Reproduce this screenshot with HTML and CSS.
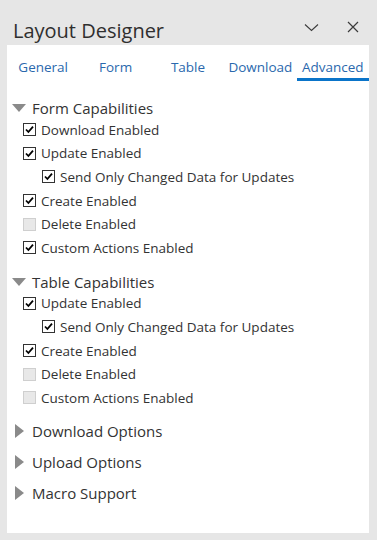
FILE: index.html
```html
<!DOCTYPE html>
<html lang="en">

<head>
    <meta charset="UTF-8">
    <meta name="viewport" content="width=device-width, initial-scale=1.0">
    <title>Layout Designer</title>
    <link rel="stylesheet" href="styles.css">
</head>

<body>
    <div class="header">
        <h1 class="title">Layout Designer</h1>
        <div class="header-buttons">
            <span class="icon-btn">
                <svg width="15" height="9" viewBox="0 0 15 9"><polyline points="1,1.5 7.5,7.5 14,1.5" fill="none" stroke="#3b3b3b" stroke-width="1.1"/></svg>
            </span>
            <span class="icon-btn">
                <svg width="12" height="12" viewBox="0 0 12 12"><path d="M1 1 L11 11 M11 1 L1 11" stroke="#3b3b3b" stroke-width="1.2"/></svg>
            </span>
        </div>
    </div>

    <div class="panel">
        <div class="tabs">
            <div class="tab">General</div>
            <div class="tab">Form</div>
            <div class="tab">Table</div>
            <div class="tab">Download</div>
            <div class="tab active">Advanced</div>
        </div>

        <div class="section">
            <div class="section-head"><span class="tri-down"></span>Form Capabilities</div>
            <div class="row"><span class="box checked"></span>Download Enabled</div>
            <div class="row"><span class="box checked"></span>Update Enabled</div>
            <div class="row sub"><span class="box checked"></span>Send Only Changed Data for Updates</div>
            <div class="row"><span class="box checked"></span>Create Enabled</div>
            <div class="row"><span class="box off"></span>Delete Enabled</div>
            <div class="row"><span class="box checked"></span>Custom Actions Enabled</div>
        </div>

        <div class="section">
            <div class="section-head"><span class="tri-down"></span>Table Capabilities</div>
            <div class="row"><span class="box checked"></span>Update Enabled</div>
            <div class="row sub"><span class="box checked"></span>Send Only Changed Data for Updates</div>
            <div class="row"><span class="box checked"></span>Create Enabled</div>
            <div class="row"><span class="box off"></span>Delete Enabled</div>
            <div class="row"><span class="box off"></span>Custom Actions Enabled</div>
        </div>

        <div class="collapsed">
            <div class="collapsed-head"><span class="tri-right"></span>Download Options</div>
            <div class="collapsed-head"><span class="tri-right"></span>Upload Options</div>
            <div class="collapsed-head"><span class="tri-right"></span>Macro Support</div>
        </div>
    </div>
</body>
</html>
```

FILE: styles.css
```css
body {
    margin: 0;
    background-color: #e6e6e6;
    font-family: 'Open Sans', 'Noto Sans', sans-serif;
    color: #333333;
}

.header {
    height: 45px;
    display: flex;
    align-items: center;
    justify-content: space-between;
    padding: 0 18px 0 13px;
}

.title {
    margin: 0;
    font-size: 20px;
    font-weight: normal;
    color: #2f2f2f;
    padding-top: 16px;
    line-height: 28px;
}

.header-buttons {
    display: flex;
    gap: 28px;
    padding-top: 9px;
}

.icon-btn {
    display: flex;
    align-items: center;
    height: 14px;
}

.panel {
    background-color: #ffffff;
    margin: 0 8px 7px 7px;
    height: 488px;
}

.tabs {
    display: grid;
    grid-template-columns: repeat(5, 1fr);
    padding-top: 12px;
}

.tab {
    text-align: center;
    font-size: 13.5px;
    color: #2a68ad;
    line-height: 20px;
    padding-bottom: 1px;
    border-bottom: 3px solid transparent;
}

.tab.active {
    border-bottom-color: #0a74c9;
}

.section {
    padding-top: 17px;
}

.section + .section {
    padding-top: 12px;
}

.section-head {
    display: flex;
    align-items: center;
    font-size: 15px;
    height: 20px;
    padding-left: 5px;
}

.tri-down {
    width: 0;
    height: 0;
    border-left: 7px solid transparent;
    border-right: 7px solid transparent;
    border-top: 8px solid #8a8a8a;
    margin-right: 6px;
}

.row {
    display: flex;
    align-items: center;
    height: 23.6px;
    font-size: 13.5px;
    padding-left: 16px;
}

.row.sub {
    padding-left: 35px;
}

.box {
    width: 11px;
    height: 11px;
    margin-right: 5px;
    border: 1px solid #333333;
    background: #ffffff;
    flex-shrink: 0;
}

.box.checked {
    background-image: url("data:image/svg+xml,%3Csvg xmlns='http://www.w3.org/2000/svg' width='11' height='11' viewBox='0 0 11 11'%3E%3Cpath d='M2 5.5 L4.4 8 L9 2.6' fill='none' stroke='%23000' stroke-width='1.8'/%3E%3C/svg%3E");
}

.box.off {
    border-color: #cfcfcf;
    background: #e8e8e8;
}

.collapsed {
    padding-top: 6px;
}

.collapsed-head {
    display: flex;
    align-items: center;
    height: 31px;
    font-size: 15px;
    padding-left: 8px;
}

.tri-right {
    width: 0;
    height: 0;
    border-top: 7px solid transparent;
    border-bottom: 7px solid transparent;
    border-left: 9px solid #8a8a8a;
    margin-right: 8px;
}
```
